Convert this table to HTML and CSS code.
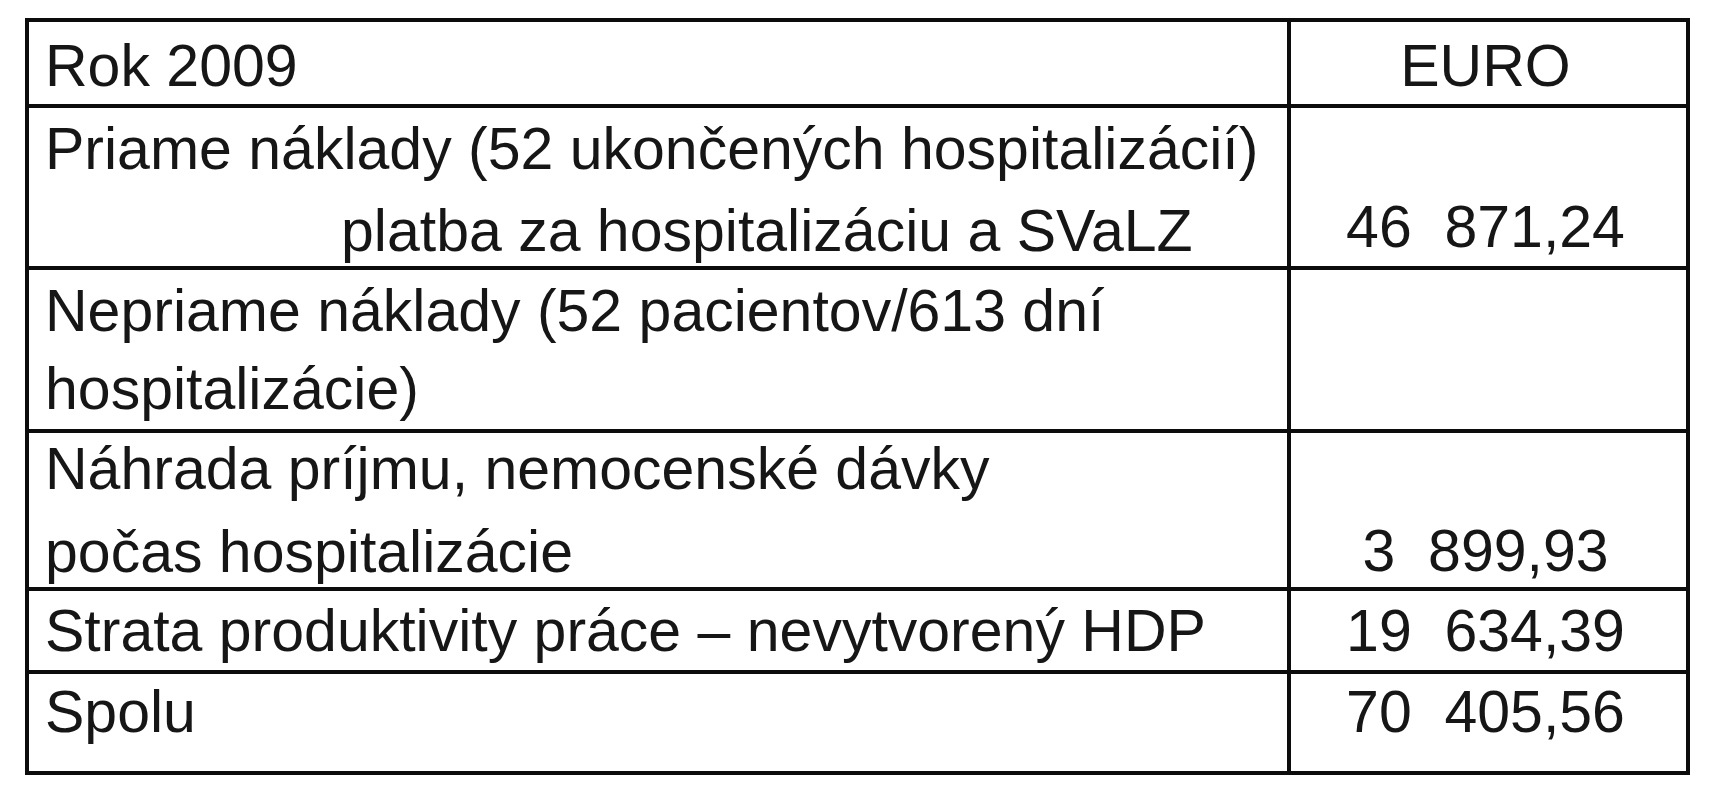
FILE: index.html
```html
<!DOCTYPE html>
<html lang="sk">
<head>
<meta charset="utf-8">
<title>Rok 2009 – náklady</title>
<link rel="stylesheet" href="styles.css">
</head>
<body>
<div class="cost-table">
  <div class="cell label r0"><div class="line">Rok 2009</div></div>
  <div class="cell value r0"><div class="line">EURO</div></div>

  <div class="cell label r1">
    <div class="line">Priame náklady (52 ukončených hospitalizácií)</div>
    <div class="line second indent">platba za hospitalizáciu a SVaLZ</div>
  </div>
  <div class="cell value r1 at-bottom"><div class="line">46&nbsp; 871,24</div></div>

  <div class="cell label r2">
    <div class="line">Nepriame náklady (52 pacientov/613 dní</div>
    <div class="line second">hospitalizácie)</div>
  </div>
  <div class="cell value r2"></div>

  <div class="cell label r3">
    <div class="line">Náhrada príjmu, nemocenské dávky</div>
    <div class="line second">počas hospitalizácie</div>
  </div>
  <div class="cell value r3 at-bottom"><div class="line">3&nbsp; 899,93</div></div>

  <div class="cell label r4"><div class="line">Strata produktivity práce – nevytvorený HDP</div></div>
  <div class="cell value r4"><div class="line">19&nbsp; 634,39</div></div>

  <div class="cell label r5 last"><div class="line">Spolu</div></div>
  <div class="cell value r5 last"><div class="line">70&nbsp; 405,56</div></div>
</div>
</body>
</html>
```

FILE: styles.css
```css
html, body {
  margin: 0;
  padding: 0;
  background: #ffffff;
}

body {
  font-family: "Liberation Sans", Arial, Helvetica, sans-serif;
  font-size: 59px;
  color: #161616;
}

.cost-table {
  display: grid;
  grid-template-columns: 1262px 395px;
  grid-template-rows: 86px 162px 163px 158px 83px 97px;
  width: max-content;
  margin: 18px 0 0 25px;
  border: 4px solid #0c0c0c;
}

.cell {
  box-sizing: border-box;
  display: flex;
  flex-direction: column;
  border-bottom: 4px solid #0c0c0c;
  white-space: nowrap;
}

.cell.last {
  border-bottom: none;
}

.label {
  border-right: 4px solid #0c0c0c;
  padding-left: 16px;
}

.value {
  align-items: center;
  padding-right: 6px;
}

.value.at-bottom {
  justify-content: flex-end;
}

.line {
  line-height: 59px;
  height: 59px;
}

.indent {
  padding-left: 296px;
}

/* per-row vertical placement */
.r0 { padding-top: 15px; }
.r1 { padding-top: 12px; }
.r1 .second { margin-top: 23px; }
.r2 { padding-top: 12px; }
.r2 .second { margin-top: 19px; }
.r3 { padding-top: 7px; }
.r3 .second { margin-top: 24px; }
.r4 { padding-top: 11px; }
.r5 { padding-top: 9px; }

.value.r1.at-bottom { padding-top: 0; padding-bottom: 9px; }
.value.r3.at-bottom { padding-top: 0; padding-bottom: 6px; }
```
